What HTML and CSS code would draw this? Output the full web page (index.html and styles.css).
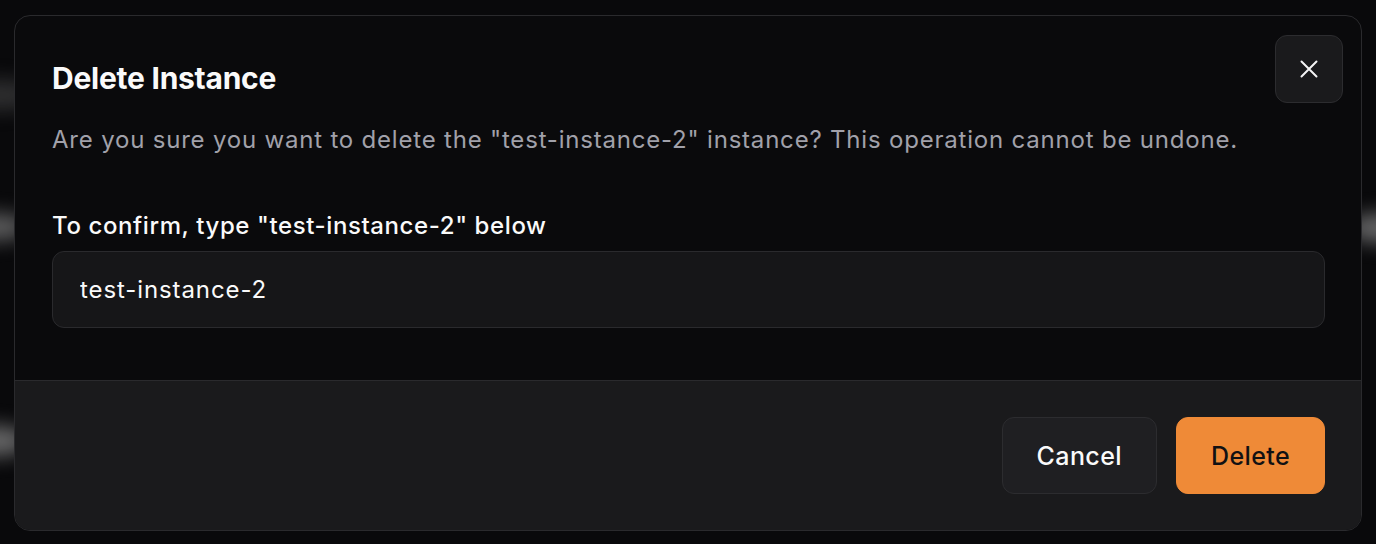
FILE: index.html
```html
<!DOCTYPE html>
<html lang="en">
<head>
<meta charset="utf-8">
<title>Delete Instance</title>
<link rel="stylesheet" href="styles.css">
</head>
<body>
<div class="backdrop">
  <span class="glow glow-l1"></span>
  <span class="glow glow-l2"></span>
  <span class="glow glow-l3"></span>
  <span class="glow glow-r1"></span>
</div>
<div class="overlay">
  <div class="modal" role="dialog" aria-labelledby="dlg-title">
    <button class="close" aria-label="Close">
      <svg width="18" height="18" viewBox="0 0 18 18" fill="none" stroke="#f4f4f5" stroke-width="2" stroke-linecap="round"><path d="M1.5 1.5 L16.5 16.5 M16.5 1.5 L1.5 16.5"/></svg>
    </button>
    <div class="modal-body">
      <h2 id="dlg-title" class="title">Delete Instance</h2>
      <p class="desc">Are you sure you want to delete the "test-instance-2" instance? This operation cannot be undone.</p>
      <label class="label" for="confirm">To confirm, type "test-instance-2" below</label>
      <input id="confirm" class="input" type="text" value="test-instance-2">
    </div>
    <div class="modal-footer">
      <button class="btn btn-cancel">Cancel</button>
      <button class="btn btn-delete">Delete</button>
    </div>
  </div>
</div>
</body>
</html>
```

FILE: styles.css
```css
html, body {
  margin: 0;
  height: 100%;
}
body {
  background: #09090b;
  font-family: Inter, "Noto Sans", sans-serif;
  color: #fafafa;
  overflow: hidden;
  position: relative;
}
.backdrop {
  position: absolute;
  inset: 0;
  z-index: 0;
}
.glow {
  position: absolute;
  border-radius: 50%;
  filter: blur(10px);
}
.glow-l1 {
  left: -40px; top: 80px; width: 80px; height: 30px;
  background: rgba(120,120,120,0.35);
}
.glow-l2 {
  left: -40px; top: 214px; width: 70px; height: 26px;
  background: rgba(170,170,170,0.55);
}
.glow-l3 {
  left: -40px; top: 426px; width: 70px; height: 30px;
  background: rgba(170,170,170,0.6);
}
.glow-r1 {
  right: -40px; top: 214px; width: 70px; height: 28px;
  background: rgba(170,170,170,0.6);
}
.overlay {
  position: relative;
  z-index: 1;
  padding: 15px 14px;
}
.modal {
  position: relative;
  background: #0a0a0c;
  border: 1px solid #2a2a2d;
  border-radius: 16px;
  overflow: hidden;
}
.close {
  position: absolute;
  top: 19px;
  right: 18px;
  width: 68px;
  height: 68px;
  border-radius: 12px;
  border: 1px solid #2c2c2f;
  background: #1a1a1c;
  display: flex;
  align-items: center;
  justify-content: center;
  padding: 0;
  cursor: pointer;
}
.modal-body {
  padding: 44px 36px 52px 37px;
}
.title {
  margin: 0;
  font-size: 30px;
  font-weight: 700;
  line-height: 36px;
  letter-spacing: -0.25px;
  color: #fafafa;
}
.desc {
  margin: 28px 0 0;
  font-size: 24px;
  line-height: 32px;
  letter-spacing: 0.8px;
  color: #a1a1aa;
}
.label {
  display: block;
  margin-top: 54px;
  font-size: 24px;
  line-height: 32px;
  font-weight: 500;
  letter-spacing: 0.6px;
  color: #fafafa;
}
.input {
  display: block;
  box-sizing: border-box;
  width: 100%;
  height: 77px;
  margin-top: 9px;
  padding: 0 27px;
  border: 1px solid #2a2a2d;
  border-radius: 12px;
  background: #161618;
  color: #fafafa;
  font-family: inherit;
  font-size: 24px;
  letter-spacing: 0.9px;
  outline: none;
}
.modal-footer {
  display: flex;
  justify-content: flex-end;
  gap: 19px;
  padding: 36px 36px 36px;
  background: #1a1a1c;
  border-top: 1px solid #2a2a2d;
}
.btn {
  height: 77px;
  border-radius: 12px;
  font-family: inherit;
  font-size: 25px;
  font-weight: 500;
  letter-spacing: 0.4px;
  padding: 0 34px;
  cursor: pointer;
}
.btn-cancel {
  background: #1f1f22;
  border: 1px solid #2c2c2f;
  color: #fafafa;
}
.btn-delete {
  background: #ef8a37;
  border: 1px solid #ef8a37;
  color: #111113;
}
```
